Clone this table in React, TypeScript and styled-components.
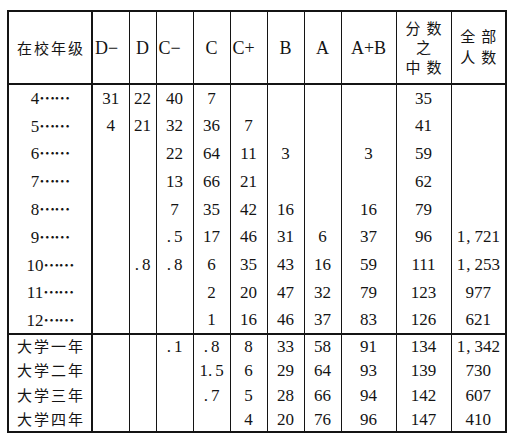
import styled, { createGlobalStyle } from "styled-components"

const GlobalStyle = createGlobalStyle`
    html, body {
        margin: 0;
        padding: 0;
        background: #fff;
    }
    body {
        padding: 10px 0 0 7px;
        font-family: "Liberation Serif", "Noto Sans CJK SC", serif;
        color: #141414;
    }
`

const widths = [84, 37, 27, 37, 37, 37, 37, 37, 55, 55, 55]

const schoolRows: string[][] = [
    ["4", "31", "22", "40", "7", "", "", "", "", "35", ""],
    ["5", "4", "21", "32", "36", "7", "", "", "", "41", ""],
    ["6", "", "", "22", "64", "11", "3", "", "3", "59", ""],
    ["7", "", "", "13", "66", "21", "", "", "", "62", ""],
    ["8", "", "", "7", "35", "42", "16", "", "16", "79", ""],
    ["9", "", "", ".5", "17", "46", "31", "6", "37", "96", "1,721"],
    ["10", "", ".8", ".8", "6", "35", "43", "16", "59", "111", "1,253"],
    ["11", "", "", "", "2", "20", "47", "32", "79", "123", "977"],
    ["12", "", "", "", "1", "16", "46", "37", "83", "126", "621"],
]

const collegeRows: string[][] = [
    ["大学一年", "", "", ".1", ".8", "8", "33", "58", "91", "134", "1,342"],
    ["大学二年", "", "", "", "1.5", "6", "29", "64", "93", "139", "730"],
    ["大学三年", "", "", "", ".7", "5", "28", "66", "94", "142", "607"],
    ["大学四年", "", "", "", "", "4", "20", "76", "96", "147", "410"],
]

// the print spaces out the decimal point and the thousands comma
const Num = ({ value }: { value: string }) => {
    const parts = value.split(/([.,])/)
    return (
        <>
            {parts.map((p, i) =>
                p === "." || p === "," ? <Mark key={i} $comma={p === ","}>{p}</Mark> : p
            )}
        </>
    )
}

const App = () => {
    return (
        <>
            <GlobalStyle />
            <Table>
                <colgroup>
                    {widths.map((w, i) => (
                        <col key={i} style={{ width: w }} />
                    ))}
                </colgroup>
                <thead>
                    <HeadRow>
                        <Th $align="left">
                            <Label>在校年级</Label>
                        </Th>
                        <Th $align="left">D−</Th>
                        <Th>D</Th>
                        <Th $align="left">C−</Th>
                        <Th>C</Th>
                        <Th $align="left">C+</Th>
                        <Th>B</Th>
                        <Th>A</Th>
                        <Th>A+B</Th>
                        <Th>
                            <Stack>
                                <span>分数</span>
                                <span>之</span>
                                <span>中数</span>
                            </Stack>
                        </Th>
                        <Th>
                            <Stack $raised>
                                <span>全部</span>
                                <span>人数</span>
                            </Stack>
                        </Th>
                    </HeadRow>
                </thead>
                <tbody>
                    {schoolRows.map((row, r) => (
                        <SchoolRow key={r} $last={r === schoolRows.length - 1}>
                            {row.map((cell, c) =>
                                c === 0 ? (
                                    <Td key={c}>
                                        {cell}
                                        <Leader>……</Leader>
                                    </Td>
                                ) : (
                                    <Td key={c}>
                                        <Num value={cell} />
                                    </Td>
                                )
                            )}
                        </SchoolRow>
                    ))}
                    {collegeRows.map((row, r) => (
                        <CollegeRow key={r}>
                            {row.map((cell, c) =>
                                c === 0 ? (
                                    <Td key={c} $align="left">
                                        <Label>{cell}</Label>
                                    </Td>
                                ) : (
                                    <Td key={c}>
                                        <Num value={cell} />
                                    </Td>
                                )
                            )}
                        </CollegeRow>
                    ))}
                </tbody>
            </Table>
        </>
    )
}

const Table = styled.table`
    border-collapse: collapse;
    table-layout: fixed;
    width: 498px;
    border: 2px solid #141414;
    font-size: 17px;
    line-height: 1;

    td:first-child,
    th:first-child {
        border-right-width: 2px;
    }
`

const HeadRow = styled.tr`
    height: 73px;
    border-bottom: 2px solid #141414;
`

const SchoolRow = styled.tr<{ $last?: boolean }>`
    height: 27.8px;
    border-bottom: ${(p) => (p.$last ? "2px solid #141414" : "none")};
`

const CollegeRow = styled.tr`
    height: 24.4px;
`

const Th = styled.th<{ $align?: "left" | "center" }>`
    border-left: 1px solid #141414;
    border-right: 1px solid #141414;
    padding: 0 0 0 ${(p) => (p.$align === "left" ? "2px" : "0")};
    text-align: ${(p) => p.$align ?? "center"};
    font-weight: normal;
    font-size: 18px;
    white-space: nowrap;
    vertical-align: middle;
`

const Td = styled.td<{ $align?: "left" | "center" }>`
    border-left: 1px solid #141414;
    border-right: 1px solid #141414;
    padding: 0 0 0 ${(p) => (p.$align === "left" ? "6px" : "0")};
    text-align: ${(p) => p.$align ?? "center"};
    white-space: nowrap;
    vertical-align: middle;
`

const Label = styled.span`
    display: inline-block;
    font-family: "Noto Sans CJK SC", sans-serif;
    font-size: 15px;
    letter-spacing: 2px;
    margin-right: -2px;
    padding-left: 2px;

    th & {
        padding-left: 6px;
    }
`

const Leader = styled.span`
    font-family: "Noto Sans CJK SC", sans-serif;
    font-size: 16px;
    font-weight: 700;
    letter-spacing: -1px;
`

const Mark = styled.span<{ $comma?: boolean }>`
    margin: ${(p) => (p.$comma ? "0 4px 0 1px" : "0 3px 0 0")};
`

const Stack = styled.div<{ $raised?: boolean }>`
    display: flex;
    flex-direction: column;
    align-items: center;
    gap: ${(p) => (p.$raised ? "5px" : "3px")};
    margin-top: ${(p) => (p.$raised ? "-2px" : "0")};
    font-family: "Noto Sans CJK SC", sans-serif;
    font-size: 15px;
    letter-spacing: 6px;
    padding-left: 6px;
    line-height: 1.1;
`

export default App
